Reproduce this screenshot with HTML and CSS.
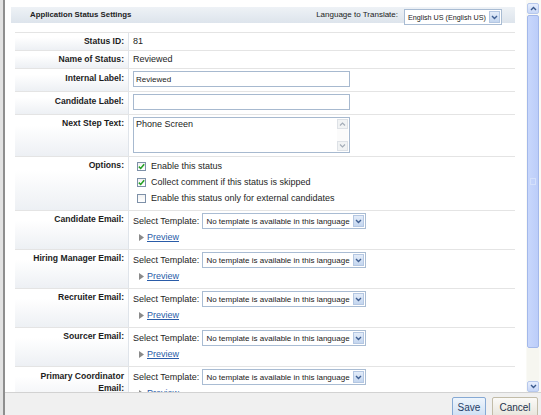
FILE: index.html
```html
<!DOCTYPE html>
<html>
<head>
<meta charset="utf-8">
<title>Application Status Settings</title>
<link rel="stylesheet" href="styles.css">
</head>
<body>
<div class="frame">
  <div class="main">
    <div class="content">
      <div class="header">
        <div class="title">Application Status Settings</div>
        <div class="lang">
          <span class="lang-label">Language to Translate:</span>
          <div class="select select-lang">
            <span class="select-text">English US (English US)</span>
            <span class="select-btn"><svg width="7" height="5" viewBox="0 0 7 5"><polyline points="1,1 3.5,3.5 6,1" fill="none" stroke="#3f5f92" stroke-width="1.4"/></svg></span>
          </div>
        </div>
      </div>

      <div class="form">
        <div class="row row-plain">
          <div class="label">Status ID:</div>
          <div class="value">81</div>
        </div>
        <div class="row row-plain">
          <div class="label">Name of Status:</div>
          <div class="value">Reviewed</div>
        </div>
        <div class="row row-input">
          <div class="label">Internal Label:</div>
          <div class="value"><input class="text-input" type="text" value="Reviewed"></div>
        </div>
        <div class="row row-input">
          <div class="label">Candidate Label:</div>
          <div class="value"><input class="text-input" type="text" value=""></div>
        </div>
        <div class="row row-area">
          <div class="label">Next Step Text:</div>
          <div class="value">
            <div class="textarea">
              <div class="textarea-text">Phone Screen</div>
              <div class="ta-scroll">
                <span class="ta-btn"><svg width="7" height="4" viewBox="0 0 7 4"><polyline points="1,3.5 3.5,1 6,3.5" fill="none" stroke="#a4adb8" stroke-width="1.2"/></svg></span>
                <span class="ta-track"></span>
                <span class="ta-btn"><svg width="7" height="4" viewBox="0 0 7 4"><polyline points="1,0.5 3.5,3 6,0.5" fill="none" stroke="#a4adb8" stroke-width="1.2"/></svg></span>
              </div>
            </div>
          </div>
        </div>
        <div class="row row-options">
          <div class="label">Options:</div>
          <div class="value">
            <div class="option"><span class="cb"><svg width="7" height="7" viewBox="0 0 7 7"><polyline points="0.8,3.6 2.7,5.5 6.2,1.2" fill="none" stroke="#22a022" stroke-width="1.5"/></svg></span><span class="opt-text">Enable this status</span></div>
            <div class="option"><span class="cb"><svg width="7" height="7" viewBox="0 0 7 7"><polyline points="0.8,3.6 2.7,5.5 6.2,1.2" fill="none" stroke="#22a022" stroke-width="1.5"/></svg></span><span class="opt-text">Collect comment if this status is skipped</span></div>
            <div class="option"><span class="cb"></span><span class="opt-text">Enable this status only for external candidates</span></div>
          </div>
        </div>

        <div class="row row-email">
          <div class="label">Candidate Email:</div>
          <div class="value">
            <div class="tpl-line"><span>Select Template:</span>
              <div class="select select-tpl"><span class="select-text">No template is available in this language</span><span class="select-btn"><svg width="7" height="5" viewBox="0 0 7 5"><polyline points="1,1 3.5,3.5 6,1" fill="none" stroke="#3f5f92" stroke-width="1.4"/></svg></span></div>
            </div>
            <div class="preview-line"><svg class="tri" width="5" height="7" viewBox="0 0 5 7"><polygon points="0,0 5,3.5 0,7" fill="#8a8a8a"/></svg><a class="link" href="#">Preview</a></div>
          </div>
        </div>
        <div class="row row-email">
          <div class="label">Hiring Manager Email:</div>
          <div class="value">
            <div class="tpl-line"><span>Select Template:</span>
              <div class="select select-tpl"><span class="select-text">No template is available in this language</span><span class="select-btn"><svg width="7" height="5" viewBox="0 0 7 5"><polyline points="1,1 3.5,3.5 6,1" fill="none" stroke="#3f5f92" stroke-width="1.4"/></svg></span></div>
            </div>
            <div class="preview-line"><svg class="tri" width="5" height="7" viewBox="0 0 5 7"><polygon points="0,0 5,3.5 0,7" fill="#8a8a8a"/></svg><a class="link" href="#">Preview</a></div>
          </div>
        </div>
        <div class="row row-email">
          <div class="label">Recruiter Email:</div>
          <div class="value">
            <div class="tpl-line"><span>Select Template:</span>
              <div class="select select-tpl"><span class="select-text">No template is available in this language</span><span class="select-btn"><svg width="7" height="5" viewBox="0 0 7 5"><polyline points="1,1 3.5,3.5 6,1" fill="none" stroke="#3f5f92" stroke-width="1.4"/></svg></span></div>
            </div>
            <div class="preview-line"><svg class="tri" width="5" height="7" viewBox="0 0 5 7"><polygon points="0,0 5,3.5 0,7" fill="#8a8a8a"/></svg><a class="link" href="#">Preview</a></div>
          </div>
        </div>
        <div class="row row-email">
          <div class="label">Sourcer Email:</div>
          <div class="value">
            <div class="tpl-line"><span>Select Template:</span>
              <div class="select select-tpl"><span class="select-text">No template is available in this language</span><span class="select-btn"><svg width="7" height="5" viewBox="0 0 7 5"><polyline points="1,1 3.5,3.5 6,1" fill="none" stroke="#3f5f92" stroke-width="1.4"/></svg></span></div>
            </div>
            <div class="preview-line"><svg class="tri" width="5" height="7" viewBox="0 0 5 7"><polygon points="0,0 5,3.5 0,7" fill="#8a8a8a"/></svg><a class="link" href="#">Preview</a></div>
          </div>
        </div>
        <div class="row row-email">
          <div class="label label-wrap">Primary Coordinator Email:</div>
          <div class="value">
            <div class="tpl-line"><span>Select Template:</span>
              <div class="select select-tpl"><span class="select-text">No template is available in this language</span><span class="select-btn"><svg width="7" height="5" viewBox="0 0 7 5"><polyline points="1,1 3.5,3.5 6,1" fill="none" stroke="#3f5f92" stroke-width="1.4"/></svg></span></div>
            </div>
            <div class="preview-line"><svg class="tri" width="5" height="7" viewBox="0 0 5 7"><polygon points="0,0 5,3.5 0,7" fill="#8a8a8a"/></svg><a class="link" href="#">Preview</a></div>
          </div>
        </div>
      </div>
    </div>

    <div class="scrollbar">
      <span class="sb-btn"><svg width="7" height="5" viewBox="0 0 7 5"><polyline points="1,4 3.5,1.5 6,4" fill="none" stroke="#3b5a8c" stroke-width="1.4"/></svg></span>
      <span class="sb-thumb"><span class="sb-grip"></span></span>
      <span class="sb-track"></span>
      <span class="sb-btn"><svg width="7" height="5" viewBox="0 0 7 5"><polyline points="1,1 3.5,3.5 6,1" fill="none" stroke="#3b5a8c" stroke-width="1.4"/></svg></span>
    </div>
  </div>

  <div class="footer">
    <button class="btn btn-save" type="button">Save</button>
    <button class="btn btn-cancel" type="button">Cancel</button>
  </div>
</div>
</body>
</html>
```

FILE: styles.css
```css
* { box-sizing: border-box; }

html, body {
  margin: 0;
  padding: 0;
}

body {
  width: 541px;
  height: 415px;
  overflow: hidden;
  background: #e2e2e2;
  font-family: "Liberation Sans", Arial, sans-serif;
  font-size: 9px;
  color: #1e1e1e;
}

.frame {
  margin-left: 3px;
  border-left: 2px solid #8e8e8e;
  height: 415px;
  background: #fff;
  display: flex;
  flex-direction: column;
}

.main {
  height: 392px;
  display: flex;
  overflow: hidden;
}

.content {
  flex: 1;
  min-width: 0;
  padding: 7px 11px 0 6px;
  overflow: hidden;
}

/* header bar */
.header {
  height: 16px;
  display: flex;
  justify-content: space-between;
  align-items: flex-start;
  background: linear-gradient(#eef2f6, #dde4ec);
  padding: 0 13px 0 19px;
}

.title {
  font-weight: bold;
  font-size: 7.8px;
  line-height: 16px;
  color: #222;
}

.lang {
  display: flex;
  align-items: flex-start;
}

.lang-label {
  font-size: 8px;
  line-height: 16px;
  color: #222;
}

/* fake selects */
.select {
  display: flex;
  align-items: center;
  height: 16px;
  border: 1px solid #a9bcd3;
  background: #fff;
}

.select-lang {
  width: 98px;
  margin: 2px 0 0 6px;
}

.select-tpl {
  width: 164px;
  margin-left: 3px;
}

.select-text {
  flex: 1;
  min-width: 0;
  padding-left: 3px;
  font-size: 8px;
  white-space: nowrap;
  overflow: hidden;
  color: #1a1a1a;
}

.select-lang .select-text {
  font-size: 7.2px;
}

.select-btn {
  width: 11px;
  height: 12px;
  margin-right: 1px;
  border: 1px solid #b4c7e2;
  background: linear-gradient(#e3ecf9, #c4d6ef);
  display: flex;
  align-items: center;
  justify-content: center;
}

/* form */
.form {
  margin: 9px 0 0 4px;
}

.row {
  display: grid;
  grid-template-columns: 114px 1fr;
  border-top: 1px solid #e4e4e4;
}

.label {
  border-right: 1px solid #dfe4ea;
  background: linear-gradient(to bottom, #ffffff 25%, #edf0f4 100%);
  text-align: right;
  padding: 3px 4px 0 0;
  font-weight: bold;
  font-size: 8.6px;
  line-height: 11px;
  color: #1c1c1c;
}

.label-wrap {
  line-height: 12px;
}

.value {
  padding-left: 4px;
  line-height: 11px;
}

.row-plain .value {
  padding-top: 3px;
  padding-bottom: 3px;
}

.row-input .label {
  padding-top: 4px;
}

.row-input .value {
  padding-top: 2px;
  padding-bottom: 4px;
}

.text-input {
  display: block;
  width: 217px;
  height: 16px;
  margin: 0;
  border: 1px solid #a7b9cf;
  padding: 0 0 0 2px;
  font-family: "Liberation Sans", Arial, sans-serif;
  font-size: 8px;
  color: #1a1a1a;
  background: #fff;
  outline: none;
}

.row-area .value {
  padding-top: 2px;
  padding-bottom: 3px;
}

.textarea {
  width: 217px;
  height: 36px;
  border: 1px solid #a7b9cf;
  display: flex;
}

.textarea-text {
  flex: 1;
  padding: 1px 0 0 2px;
  font-size: 9px;
  line-height: 11px;
  color: #1a1a1a;
}

.ta-scroll {
  width: 12px;
  padding: 1px 1px 1px 0;
  display: flex;
  flex-direction: column;
}

.ta-btn {
  height: 10px;
  border: 1px solid #dde1e6;
  background: #f1f3f4;
  display: flex;
  align-items: center;
  justify-content: center;
}

.ta-track {
  flex: 1;
  background: #fbfbfb;
}

.row-options .value {
  padding-top: 1px;
  padding-bottom: 4px;
}

.option {
  display: flex;
  align-items: center;
  height: 16px;
}

.cb {
  width: 9px;
  height: 9px;
  margin-left: 4px;
  border: 1px solid #7d90a8;
  background: linear-gradient(#f2f2f2, #ffffff);
  display: flex;
  align-items: center;
  justify-content: center;
}

.opt-text {
  margin-left: 5px;
}

.row-email .value {
  padding-top: 2px;
  padding-bottom: 4px;
}

.tpl-line {
  display: flex;
  align-items: center;
  height: 16px;
}

.preview-line {
  display: flex;
  align-items: center;
  height: 16px;
  padding-left: 6px;
}

.tri {
  margin-right: 3px;
}

.link {
  color: #2a5ca8;
  text-decoration: underline;
}

/* window scrollbar */
.scrollbar {
  width: 15px;
  display: flex;
  flex-direction: column;
  padding: 3px 2px 0 1px;
  background: #fafaf6;
}

.sb-btn {
  height: 11px;
  border: 1px solid #b7c8ec;
  border-radius: 2px;
  background: linear-gradient(#e8effd, #c8d7f7);
  display: flex;
  align-items: center;
  justify-content: center;
}

.sb-thumb {
  height: 333px;
  margin-top: 1px;
  border: 1px solid #a3b8ea;
  border-radius: 2px;
  background: linear-gradient(to right, #c8d7fc, #bccdf9);
  display: flex;
  align-items: center;
  justify-content: center;
}

.sb-grip {
  width: 6px;
  height: 7px;
  border: 1px solid #d4e0fb;
}

.sb-track {
  flex: 1;
  background: #f6f6f0;
}

/* footer */
.footer {
  height: 23px;
  background: #f0f0f0;
  border-top: 1px solid #d2d2d2;
  display: flex;
  justify-content: flex-end;
  gap: 6px;
  padding: 4px 3px 0 0;
}

.btn {
  height: 20px;
  margin: 0;
  padding: 0;
  border-radius: 2px;
  font-family: "Liberation Sans", Arial, sans-serif;
  font-size: 10px;
}

.btn-save {
  width: 34px;
  border: 1px solid #86a9d4;
  background: linear-gradient(#eef5fd, #cfe0f4);
  color: #1f3d66;
}

.btn-cancel {
  width: 46px;
  border: 1px solid #c2bca8;
  background: linear-gradient(#fbfaf7, #e8e5dc);
  color: #24344e;
}
```
